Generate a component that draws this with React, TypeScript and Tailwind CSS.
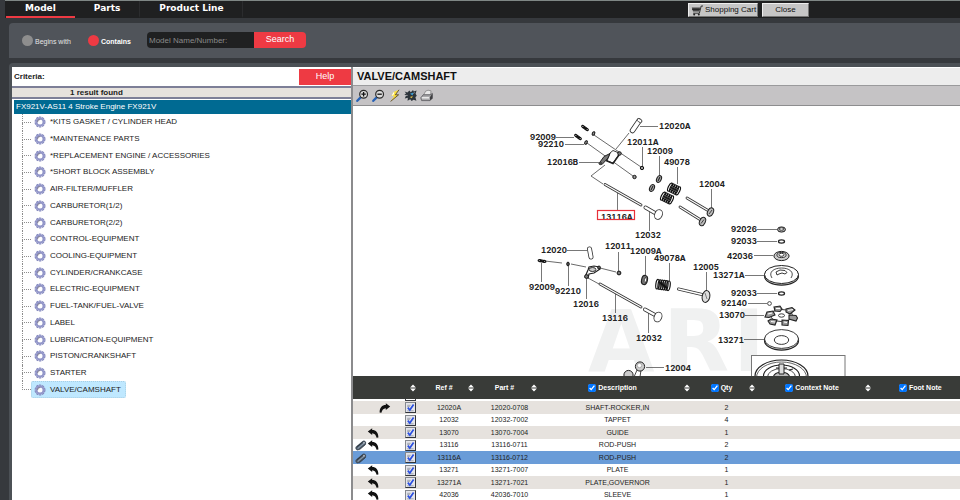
import { useState } from "react";
import type { ReactNode } from "react";

type PartRow = {
  ref: string;
  part: string;
  description: string;
  qty: number;
  clip?: boolean;
  back?: boolean;
  forward?: boolean;
};

const TABS = ["Model", "Parts", "Product Line"];

const ASSEMBLIES = [
  "*KITS GASKET / CYLINDER HEAD",
  "*MAINTENANCE PARTS",
  "*REPLACEMENT ENGINE / ACCESSORIES",
  "*SHORT BLOCK ASSEMBLY",
  "AIR-FILTER/MUFFLER",
  "CARBURETOR(1/2)",
  "CARBURETOR(2/2)",
  "CONTROL-EQUIPMENT",
  "COOLING-EQUIPMENT",
  "CYLINDER/CRANKCASE",
  "ELECTRIC-EQUIPMENT",
  "FUEL-TANK/FUEL-VALVE",
  "LABEL",
  "LUBRICATION-EQUIPMENT",
  "PISTON/CRANKSHAFT",
  "STARTER",
  "VALVE/CAMSHAFT",
];

const PARTS: PartRow[] = [
  { ref: "12020A", part: "12020-0708", description: "SHAFT-ROCKER,IN", qty: 2, forward: true },
  { ref: "12032", part: "12032-7002", description: "TAPPET", qty: 4 },
  { ref: "13070", part: "13070-7004", description: "GUIDE", qty: 1, back: true },
  { ref: "13116", part: "13116-0711", description: "ROD-PUSH", qty: 2, clip: true, back: true },
  { ref: "13116A", part: "13116-0712", description: "ROD-PUSH", qty: 2, clip: true },
  { ref: "13271", part: "13271-7007", description: "PLATE", qty: 1, back: true },
  { ref: "13271A", part: "13271-7021", description: "PLATE,GOVERNOR", qty: 1, back: true },
  { ref: "42036", part: "42036-7010", description: "SLEEVE", qty: 1, back: true },
];

// [text, x, baseline]
const CALLOUTS: [string, number, number][] = [
  ["12020A", 659, 129],
  ["92009", 530, 140],
  ["92210", 538, 147],
  ["12016B", 547, 165],
  ["12011A", 627, 145],
  ["12009", 647, 154],
  ["49078", 664, 165],
  ["12004", 699, 187],
  ["12032", 635, 238],
  ["12020", 541, 253],
  ["12011", 605, 249],
  ["12009A", 630, 254],
  ["49078A", 654, 261],
  ["12005", 693, 270],
  ["92009", 529, 290],
  ["92210", 555, 294],
  ["12016", 573, 307],
  ["13116", 602, 321],
  ["12032", 636, 341],
  ["12004", 665, 371],
  ["92026", 731, 232],
  ["92033", 731, 244],
  ["42036", 727, 259],
  ["13271A", 713, 278],
  ["92033", 731, 296],
  ["92140", 721, 306],
  ["13070", 719, 318],
  ["13271", 718, 343],
];

const LEADERS =
  "M640 126.5H658M556 137.5H574M565 144.5H584M579 162.5H599M642.5 147V166M659.5 156V176M677.5 167V184M711.5 189V209M617.5 193V211M649.5 210V231" +
  "M567 250.5H587M618.5 252V271M645.5 256V275M669.5 263V281M706.5 272V290M541.5 263V282M568.5 266V286M586.5 277V299M615.5 294V313M648.5 312V333" +
  "M646 367.5H664M757 229.5H777M757 241.5H777M754 255.5H773M745 275.5H764M757 293.5H777M748 303.5H767M745 315.5H764M744 339.5H764";

function GearIcon() {
  return (
    <svg viewBox="0 0 12 12" className="size-3 shrink-0" aria-hidden="true">
      <circle cx="6" cy="6" r="4.9" fill="none" stroke="#8387bd" strokeWidth="1.2" strokeDasharray="2.25 0.83" />
      <circle cx="6" cy="6" r="3.6" fill="#fff" stroke="#9296c9" strokeWidth="2.2" />
      <path d="M3.5 6.2A2.6 2.6 0 0 1 6.4 3.5" fill="none" stroke="#6c6878" strokeWidth="0.8" />
    </svg>
  );
}

function SortIcon() {
  return (
    <svg viewBox="0 0 6 8" className="h-2 w-1.5 shrink-0" aria-hidden="true">
      <path d="M3 0.6 5.9 3.5H0.1ZM3 7.4 5.9 4.5H0.1Z" fill="#fff" />
    </svg>
  );
}

function TurnArrow({ flipped }: { flipped?: boolean }) {
  return (
    <svg viewBox="0 0 12 12" className={flipped ? "size-3 -scale-x-100" : "size-3"} aria-hidden="true">
      <path d="M0.8 4.6 5.2 1.2V3C9 3 11.4 5.6 11.4 10.4L9.6 10.8C9 8 7.6 6.4 5.2 6.2V8Z" fill="#111" />
    </svg>
  );
}

function ClipIcon() {
  return (
    <svg viewBox="0 0 12 12" className="size-3" aria-hidden="true">
      <g fill="none" strokeLinecap="round">
        <path d="M2.8 9 8.8 4" stroke="#46525f" strokeWidth="4.6" />
        <path d="M3 9.2 9 4.2" stroke="#8494a5" strokeWidth="1.4" />
        <path d="M2.2 7.6 7.4 3.2M4.6 10.6 10.4 5.6" stroke="#27313b" strokeWidth="0.8" />
      </g>
      <circle cx="9" cy="3.8" r="0.8" fill="#d0d6dc" />
    </svg>
  );
}

function AddButton({ label }: { label: string }) {
  return (
    <button
      type="button"
      aria-label={label}
      className="mx-auto block size-[11px] border border-t-[#85888e] border-r-[#33363b] border-b-[#33363b] border-l-[#85888e] bg-[#e4e5ea]"
    >
      <svg viewBox="0 0 9 9" className="size-[9px]" aria-hidden="true">
        <path d="M1.2 2.3H4.6M1.2 3.6H3.8M1.2 7.8H7.6" stroke="#848b9a" strokeWidth="0.7" />
        <path d="M1.8 4.6 3.8 7 7.6 1.4" fill="none" stroke="#2b4fe0" strokeWidth="1.7" />
      </svg>
    </button>
  );
}

function Magnifier({ plus }: { plus?: boolean }) {
  return (
    <svg viewBox="0 0 13 13" className="size-[13px]" aria-hidden="true">
      <path d="M1.3 11.8 4.4 8.6" stroke="#2862b5" strokeWidth="2.3" strokeLinecap="round" />
      <circle cx="7.6" cy="5.2" r="3.9" fill="#dcdcdc" stroke="#2a2a2a" strokeWidth="1.2" />
      <path d={plus ? "M5.4 5.2H9.8M7.6 3V7.4" : "M5.4 5.2H9.8"} stroke="#111" strokeWidth="1.3" />
    </svg>
  );
}

function ToolButton({ label, children }: { label: string; children: ReactNode }) {
  return (
    <button type="button" aria-label={label} className="flex w-4 justify-center">
      {children}
    </button>
  );
}

function Toolbar() {
  return (
    <div className="flex h-5 items-center border-b border-[#8d8d8f] bg-[#c5c3c5] pl-px">
      <ToolButton label="Zoom in">
        <Magnifier plus />
      </ToolButton>
      <ToolButton label="Zoom out">
        <Magnifier />
      </ToolButton>
      <ToolButton label="Hotlinks">
        <svg viewBox="0 0 13 13" className="size-[13px]" aria-hidden="true">
          <path d="M11 0.8 5.4 3 3.4 7H6.2L2.6 12.4 10.6 5.8H7.4Z" fill="#fae03c" />
          <path d="M11 0.8 7.4 5.8H10.6L2.6 12.4" fill="none" stroke="#5a4a30" strokeWidth="0.9" />
          <path d="M6 3.4 4.4 6.6" stroke="#fff" strokeWidth="1.2" />
        </svg>
      </ToolButton>
      <ToolButton label="Fit to window">
        <svg viewBox="0 0 13 13" className="size-[13px]" aria-hidden="true">
          <path
            d="M0.6 2.4 3.4 3.6 5.4 1.6 6.8 3.2 9 1 9.8 2.6 12.6 1.6 11.6 4.8 12.8 6.8 11.4 8.2 12.4 11.8 9.6 10.8 7.6 12 6.2 10.2 3.6 11.8 3.8 8.8 0.8 9.6 2 6.4 0.4 5.2 2.2 4.6Z"
            fill="#2c343b"
          />
          <path d="M1.4 6.4H3.6M10.4 3.4 9.6 4.6" stroke="#c5c3c5" strokeWidth="0.8" />
          <path d="M6 4.8 9.4 3.6 8.6 6.6Z" fill="#3c9fd4" />
          <path d="M5.8 8 8.8 7 7.8 9.2Z" fill="#d9bb48" />
        </svg>
      </ToolButton>
      <ToolButton label="Print">
        <svg viewBox="0 0 13 13" className="size-[13px]" aria-hidden="true">
          <path d="M3.6 6 5.6 2.2 8 1.2 11 1.8 10.6 6Z" fill="#e8e8e8" stroke="#7a7a7a" strokeWidth="0.7" />
          <path d="M0.8 8.8 3.2 5.8H10.2L12.4 4.4 12.6 9 10 11.6H1.6Z" fill="#a9a9ab" stroke="#57575a" strokeWidth="0.8" />
          <path d="M10 8 12.2 4.8V9.2L10 11.4Z" fill="#3f3f42" />
          <path d="M1.8 8.8H9" stroke="#f4f4f4" strokeWidth="1.3" />
        </svg>
      </ToolButton>
    </div>
  );
}

function Spring({ x, y, angle, coils, ry }: { x: number; y: number; angle: number; coils: number; ry: number }) {
  return (
    <g transform={`translate(${x} ${y}) rotate(${angle})`} fill="none" stroke="#111" strokeWidth="1.2">
      {Array.from({ length: coils }, (_, i) => (
        <ellipse key={i} cx={(i - (coils - 1) / 2) * 2.2} cy="0" rx="1.7" ry={ry} />
      ))}
    </g>
  );
}

// round bar drawn as an outlined thick line
function Bar({ d, width }: { d: string; width: number }) {
  return (
    <g fill="none" strokeLinecap="round">
      <path d={d} stroke="#333" strokeWidth={width} />
      <path d={d} stroke="#fff" strokeWidth={width - 1.6} />
    </g>
  );
}

function Diagram() {
  return (
    <svg
      viewBox="353 106 607 270"
      className="block h-[270px] w-[607px] max-w-none"
      role="img"
      aria-label="Valve and camshaft exploded view"
    >
      <g fill="#f0f1f1" fontFamily="'DejaVu Sans', sans-serif" fontWeight="700" fontSize="86">
        <text x="588" y="371">A</text>
        <text x="663" y="371">R</text>
        <text x="733" y="371">I</text>
      </g>

      <path d={LEADERS} stroke="#555" strokeWidth="0.8" fill="none" />

      <g stroke="#444" strokeWidth="0.8" fill="none">
        <path d="M629 133 616 149M594 135 641 167M587 143 633 176M605 165 591 176 603 184" />
        <path d="M545 261 562 263M571 264 586 267M600 268 616 272M588 278 599 284" />
      </g>

      {/* inlet rocker */}
      <Bar d="M632.5 130.5 639 121" width={5.5} />
      <ellipse cx="639.6" cy="120.6" rx="2.6" ry="1.6" transform="rotate(35 639.6 120.6)" fill="#fff" stroke="#333" strokeWidth="0.8" />
      <Spring x={585} y={128} angle={35} coils={3} ry={1} />
      <Spring x={578} y={137} angle={35} coils={3} ry={1} />
      <g fill="#999" stroke="#111" strokeWidth="1">
        <ellipse cx="593.5" cy="133.5" rx="1.2" ry="1.9" transform="rotate(25 593.5 133.5)" />
        <ellipse cx="586" cy="142.5" rx="1.2" ry="1.9" transform="rotate(25 586 142.5)" />
        <circle cx="642" cy="168" r="1.7" />
        <circle cx="634.5" cy="177" r="1.7" />
      </g>
      <path d="M610 153 613 150.5 619 153 618 156 613 163 607 161Z" fill="#fff" stroke="#222" strokeWidth="0.9" />
      <path d="M599 163.5 604 156.500 610 153.500 608 158 602 164.500Z" fill="#777" stroke="#222" strokeWidth="1" />
      <path d="M606 160.5 613 163.5 619 155" stroke="#222" strokeWidth="1.5" fill="none" />
      <circle cx="619.5" cy="153.5" r="1.8" fill="#777" stroke="#111" strokeWidth="0.9" />
      <circle cx="600.5" cy="163.5" r="1.8" fill="#444" />

      <Bar d="M605 184.5 641 205" width={2.8} />
      <Bar d="M645.5 207.5 655 213" width={4} />
      <ellipse cx="658.5" cy="214.5" rx="3.8" ry="5" transform="rotate(22 658.5 214.5)" fill="#fff" stroke="#333" strokeWidth="0.9" />
      <g fill="#aaa" stroke="#222" strokeWidth="1.1">
        <ellipse cx="659" cy="179" rx="2.2" ry="3.6" transform="rotate(25 659 179)" />
        <ellipse cx="652" cy="188" rx="2.2" ry="3.6" transform="rotate(25 652 188)" />
        <path d="M658 181 660 177M651 190 653 186" />
      </g>
      <Spring x={674} y={189} angle={25} coils={5} ry={4.4} />
      <Spring x={667} y={198} angle={25} coils={5} ry={4.4} />
      <Bar d="M687 198 708 210.5" width={2.8} />
      <Bar d="M680 207 700 219.5" width={2.8} />
      <g fill="#bbb" stroke="#222" strokeWidth="1">
        <ellipse cx="710.5" cy="212" rx="2.8" ry="4.4" transform="rotate(25 710.5 212)" />
        <ellipse cx="702.5" cy="221.5" rx="2.8" ry="4.4" transform="rotate(25 702.5 221.5)" />
      </g>
      <path d="M709 214 712 210M701 223.5 704 219.5" stroke="#222" strokeWidth="0.8" />

      {/* exhaust rocker */}
      <Bar d="M589.5 249 591 257" width={5} />
      <Spring x={542} y={261} angle={8} coils={3} ry={1} />
      <ellipse cx="568" cy="264" rx="1.3" ry="1.9" fill="#555" stroke="#111" strokeWidth="0.9" />
      <path d="M585 277 588 270 589 267 594 266 599 267 600 269 594 273 589 274 588 278Z" fill="#fff" stroke="#222" strokeWidth="1.2" />
      <ellipse cx="592.5" cy="269.5" rx="3.4" ry="2" fill="#ccc" stroke="#222" strokeWidth="0.9" />
      <circle cx="586.5" cy="276.5" r="1.9" fill="#777" stroke="#111" strokeWidth="0.9" />
      <circle cx="599" cy="267.5" r="1.5" fill="#555" stroke="#111" strokeWidth="0.8" />
      <circle cx="619" cy="273" r="1.9" fill="#777" stroke="#111" strokeWidth="1" />
      <Bar d="M600 284 641 307" width={2.8} />
      <Bar d="M645 309.5 655 315" width={4} />
      <ellipse cx="658" cy="317" rx="3.8" ry="5" transform="rotate(22 658 317)" fill="#fff" stroke="#333" strokeWidth="0.9" />
      <ellipse cx="644.5" cy="280" rx="2.9" ry="4.6" transform="rotate(12 644.5 280)" fill="#777" stroke="#222" strokeWidth="1.2" />
      <ellipse cx="645.5" cy="280" rx="1.2" ry="2.4" transform="rotate(12 645.5 280)" fill="#fff" stroke="#222" strokeWidth="0.7" />
      <Spring x={663} y={285} angle={8} coils={6} ry={4.8} />
      <Bar d="M678.5 289 702 294.5" width={3} />
      <ellipse cx="706" cy="296.5" rx="3.8" ry="6" transform="rotate(12 706 296.5)" fill="#ddd" stroke="#222" strokeWidth="1" />
      <path d="M705 293 707 299" stroke="#666" strokeWidth="0.8" />

      {/* valves running on below the fold */}
      <path d="M641 370 640 377M637 370 634 377" stroke="#333" strokeWidth="0.9" />
      <circle cx="640" cy="366.5" r="4.6" fill="#ccc" stroke="#222" strokeWidth="1" />
      <circle cx="639.5" cy="365.5" r="2.2" fill="#fff" stroke="#888" strokeWidth="0.6" />
      <circle cx="628.5" cy="375" r="4.6" fill="#ccc" stroke="#222" strokeWidth="1" />

      {/* governor stack */}
      <g stroke="#222" fill="none">
        <ellipse cx="781.5" cy="229.5" rx="4" ry="2.6" strokeWidth="1" fill="#aaa" />
        <ellipse cx="781.5" cy="229" rx="2.2" ry="1.2" strokeWidth="0.8" fill="#fff" />
        <ellipse cx="781.5" cy="241.5" rx="3" ry="1.6" strokeWidth="1.3" />
        <ellipse cx="781.5" cy="256" rx="7.6" ry="4.6" strokeWidth="1" fill="#ccc" />
        <ellipse cx="781.5" cy="255" rx="4.6" ry="2.6" strokeWidth="0.9" fill="#eee" />
        <ellipse cx="781.5" cy="254.8" rx="2.6" ry="1.5" strokeWidth="0.9" fill="#fff" />
        <ellipse cx="781.5" cy="276" rx="17" ry="9.2" strokeWidth="1.2" fill="#ddd" />
        <ellipse cx="781.5" cy="274.5" rx="17" ry="9" strokeWidth="1" fill="#fff" />
        <path d="M772 278C768 272 774 268 781.5 268S795 272 791 278" strokeWidth="0.8" />
        <path d="M777 275 776 272 780 270 785 270.5 787 272.5 785 274 782 273 779 274Z" strokeWidth="0.9" />
        <ellipse cx="781.5" cy="293.5" rx="3" ry="1.6" strokeWidth="1.3" />
        <circle cx="769.5" cy="303.5" r="1.9" strokeWidth="0.8" fill="#fff" />
        <ellipse cx="781.5" cy="315.5" rx="11" ry="6" strokeWidth="0.9" fill="#fff" />
        <g strokeWidth="1.1" fill="#999">
          <path d="M774 307 780 306 782 309 780 311.5 775 311Z" />
          <path d="M786 309 792 307.5 795 310 790 314 786 312Z" />
          <path d="M789 315 796 315.5 797.5 318 796 321 789 319Z" />
          <path d="M782 320 788.5 320.5 788 325.5 782 325Z" />
          <path d="M771 319 777 320 775 325 770 324 768 321Z" />
          <path d="M767 312 773 311 775 315 769 317.5 765 317Z" />
        </g>
        <path d="M776 308.5H780M788 310.5 793 309.5M784 322 787 322.5M771 321.5 775 322M768 314 772 313" stroke="#fff" strokeWidth="1.2" />
        <ellipse cx="781.5" cy="315.5" rx="3" ry="1.7" strokeWidth="0.9" fill="#fff" />
        <ellipse cx="781.5" cy="340.5" rx="17" ry="9.6" strokeWidth="1.2" fill="#ddd" />
        <ellipse cx="781.5" cy="339" rx="17" ry="9.4" strokeWidth="0.9" fill="#fff" />
        <ellipse cx="781.5" cy="340" rx="7.2" ry="4.4" strokeWidth="0.9" fill="#fff" />

        <rect x="751.5" y="355.5" width="93.5" height="40" stroke="#777" strokeWidth="1" fill="#fff" />
        <ellipse cx="781.5" cy="376" rx="26.500" ry="16" strokeWidth="1.2" fill="#fff" />
        <ellipse cx="781.5" cy="377.5" rx="25" ry="15.5" strokeWidth="0.7" />
        <ellipse cx="781.5" cy="376" rx="18" ry="11" strokeWidth="1.1" />
        <ellipse cx="781.5" cy="377" rx="14" ry="8.5" strokeWidth="0.8" />
        <ellipse cx="781.5" cy="377" rx="8" ry="5" strokeWidth="1.1" fill="#bbb" />
        <path d="M779 364V374H784V364ZM776 368H779M784 368H787M789 370 793 369" strokeWidth="1" fill="#ddd" />
      </g>

      <g fill="#222" fontFamily="Inter, sans-serif" fontWeight="700" fontSize="8" className="tabular-nums">
        {CALLOUTS.map(([text, x, y]) => (
          <text key={`${text}-${y}`} x={x} y={y}>
            {text}
          </text>
        ))}
        <clipPath id="hotspot">
          <rect x="597" y="210" width="38" height="9" />
        </clipPath>
        <text x="601" y="220" clipPath="url(#hotspot)">
          13116A
        </text>
      </g>
      <rect x="597.5" y="210.5" width="37" height="9" fill="none" stroke="#e8303a" strokeWidth="1.2" />
    </svg>
  );
}

function HeaderCell({ label, checkbox, sortable = true }: { label: string; checkbox?: boolean; sortable?: boolean }) {
  return (
    <th className="p-0 font-bold">
      <div className="flex items-center pr-1">
        <span className={sortable ? "flex flex-1 items-center justify-center" : "flex flex-1 items-center pl-6"}>
          {checkbox ? (
            <label className="flex items-center gap-0.5 whitespace-nowrap">
              <input type="checkbox" defaultChecked className="m-0 size-2" />
              {label}
            </label>
          ) : (
            label
          )}
        </span>
        {sortable && <SortIcon />}
      </div>
    </th>
  );
}

function PartsTable() {
  const [selected, setSelected] = useState("13116A");

  return (
    <div className="h-[124px] shrink-0 overflow-hidden">
      <table className="w-full table-fixed border-collapse text-center text-[7px] leading-[12px] text-[#222]">
        <colgroup>
          <col className="w-[47px]" />
          <col className="w-[20px]" />
          <col className="w-[58px]" />
          <col className="w-[63px]" />
          <col className="w-[153px]" />
          <col className="w-[65px]" />
          <col className="w-[116px]" />
          <col />
        </colgroup>
        <thead>
          <tr className="h-[23px] bg-[#393b38] text-white">
            <th className="p-0" />
            <HeaderCell label="" />
            <HeaderCell label="Ref #" />
            <HeaderCell label="Part #" />
            <HeaderCell label="Description" checkbox />
            <HeaderCell label="Qty" checkbox />
            <HeaderCell label="Context Note" checkbox />
            <HeaderCell label="Foot Note" checkbox sortable={false} />
          </tr>
        </thead>
        <tbody>
          {/* bottom edge of the row scrolled under the header */}
          <tr className="h-[2px]">
            <td className="p-0" />
            <td className="p-0">
              <div className="mx-auto h-[2px] w-[11px] border-x border-b border-[#3c3f44]" />
            </td>
            <td colSpan={6} className="p-0" />
          </tr>
          {PARTS.map((row) => (
            <tr
              key={row.ref}
              onClick={() => setSelected(row.ref)}
              className={
                row.ref === selected
                  ? "bg-[#6a9cd8] odd:h-[12px] even:h-[13px]"
                  : "odd:h-[12px] odd:bg-white even:h-[13px] even:bg-[#e6e2de]"
              }
            >
              <td className="p-0 pl-0.5">
                <div className="grid w-9 grid-cols-3">
                  <span>{row.clip && <ClipIcon />}</span>
                  <span>{row.back && <TurnArrow />}</span>
                  <span>{row.forward && <TurnArrow flipped />}</span>
                </div>
              </td>
              <td className="p-0">
                <AddButton label={`Add ${row.part}`} />
              </td>
              <td className="p-0">{row.ref}</td>
              <td className="p-0">{row.part}</td>
              <td className="p-0">{row.description}</td>
              <td className="p-0">{row.qty}</td>
              <td className="p-0" />
              <td className="p-0" />
            </tr>
          ))}
        </tbody>
      </table>
    </div>
  );
}

function AssemblyTree() {
  const [active, setActive] = useState("VALVE/CAMSHAFT");

  return (
    <ul className="grid h-[284px] auto-rows-fr pl-[10px]">
      {ASSEMBLIES.map((name, i) => (
        <li key={name} className="flex min-h-0">
          <div className="flex w-[9px] flex-col">
            <span className="flex-1 border-b border-l border-dotted border-[#8c8c8c]" />
            <span className={i < ASSEMBLIES.length - 1 ? "flex-1 border-l border-dotted border-[#8c8c8c]" : "flex-1"} />
          </div>
          <button
            type="button"
            onClick={() => setActive(name)}
            className={
              name === active
                ? "flex items-center gap-1 rounded-xs border border-dotted border-[#a9cfe4] bg-[#bfe8ff] pr-1 pl-0.5"
                : "flex items-center gap-1 border border-transparent pr-1 pl-0.5"
            }
          >
            <GearIcon />
            <span>{name}</span>
          </button>
        </li>
      ))}
    </ul>
  );
}

function SidePanel() {
  return (
    <section className="flex flex-col border-r-2 border-[#8b8b8d] bg-white text-[8px] text-[#222]">
      <div className="flex h-[19px] items-center justify-between pl-0.5">
        <h2 className="font-bold">Criteria:</h2>
        <button type="button" className="h-4 w-[52px] bg-[#ee3a43] text-[9px] text-white">
          Help
        </button>
      </div>
      <div className="h-[13px] border-y-2 border-[#7d7f97] bg-[#e6e2dd] pl-[58px] leading-[9px] font-bold">
        1 result found
      </div>
      <div className="mt-px ml-0.5 h-[14px] bg-[#006a92] pl-0.5 leading-[14px] text-white">
        FX921V-AS11 4 Stroke Engine FX921V
      </div>
      <AssemblyTree />
    </section>
  );
}

function TopBar() {
  const [tab, setTab] = useState("Model");

  return (
    <header className="ml-[5px] flex h-[18px] border-t border-[#7f8785] bg-[#1f2021]">
      <nav className="flex pl-px font-['DejaVu_Sans',sans-serif] text-[9px] font-bold text-white">
        {TABS.map((name) => (
          <button
            key={name}
            type="button"
            onClick={() => setTab(name)}
            className={
              name === tab
                ? "border-b-2 border-[#ee3a43] px-[19px]"
                : "border-r border-b-2 border-r-[#2b2c2e] border-b-transparent px-[19px]"
            }
          >
            {name}
          </button>
        ))}
      </nav>
      <div className="ml-auto flex items-start gap-1 pt-0.5 pr-[151px] text-[8px] text-[#111]">
        <button
          type="button"
          className="flex h-[14px] w-[70px] items-center gap-0.5 border border-t-[#eee] border-r-[#777] border-b-[#777] border-l-[#eee] bg-[#c6c6c6] px-0.5"
        >
          <svg viewBox="0 0 12 11" className="h-[11px] w-3 shrink-0" aria-hidden="true">
            <path d="M0.8 2.4H9.2L8.2 6.6H2Z" fill="#444" />
            <path d="M12 1H10.2L8.4 8.2H2.2M1 4.4H9" fill="none" stroke="#222" strokeWidth="0.9" />
            <circle cx="3.2" cy="9.6" r="1" fill="#222" />
            <circle cx="7.8" cy="9.6" r="1" fill="#222" />
          </svg>
          <span className="whitespace-nowrap">Shopping Cart</span>
        </button>
        <button
          type="button"
          className="h-[14px] w-[47px] border border-t-[#eee] border-r-[#777] border-b-[#777] border-l-[#eee] bg-[#c6c6c6]"
        >
          Close
        </button>
      </div>
    </header>
  );
}

function SearchBar() {
  return (
    <form
      onSubmit={(e) => e.preventDefault()}
      className="mt-[5px] ml-[9px] flex h-[35px] items-center rounded-tl-sm bg-[#50545a] pb-px pl-[13px] text-white"
    >
      <label className="flex w-[66px] items-center gap-0.5 text-[7px] text-[#e4e4e4]">
        <input
          type="radio"
          name="match"
          className="size-[11px] shrink-0 appearance-none rounded-full bg-[#8e8e8e] checked:bg-[#ee3a43]"
        />
        <span className="pt-1">Begins with</span>
      </label>
      <label className="flex w-[59px] items-center gap-0.5 text-[7px] font-bold">
        <input
          type="radio"
          name="match"
          defaultChecked
          className="size-[11px] shrink-0 appearance-none rounded-full bg-[#8e8e8e] checked:bg-[#ee3a43]"
        />
        <span className="pt-1">Contains</span>
      </label>
      <input
        type="text"
        aria-label="Model name or number"
        placeholder="Model Name/Number:"
        className="h-4 w-[107px] rounded-l-sm bg-[#1f2021] px-0.5 text-[8px] placeholder:text-[#8a8a8a]"
      />
      <button type="submit" className="h-4 w-[52px] rounded-r-sm bg-[#ee3a43] text-[9px]">
        Search
      </button>
    </form>
  );
}

export default function App() {
  return (
    <div className="flex h-screen flex-col overflow-hidden bg-[#36393d] font-['Liberation_Sans',Arial,sans-serif]">
      <TopBar />
      <SearchBar />
      <main className="mt-[5px] ml-[9px] grid min-h-0 flex-1 grid-cols-[341px_minmax(0,1fr)] rounded-tl-sm bg-[#4c5156] pt-1 pl-[3px]">
        <SidePanel />
        <section className="flex min-h-0 flex-col bg-white">
          <h1 className="h-[19px] border-t border-b border-t-white border-b-[#9a9a9c] bg-[#ededed] pl-1 text-[11px] leading-[17px] font-bold text-[#111]">
            VALVE/CAMSHAFT
          </h1>
          <Toolbar />
          <div className="min-h-0 flex-1 overflow-hidden">
            <Diagram />
          </div>
          <PartsTable />
        </section>
      </main>
    </div>
  );
}
